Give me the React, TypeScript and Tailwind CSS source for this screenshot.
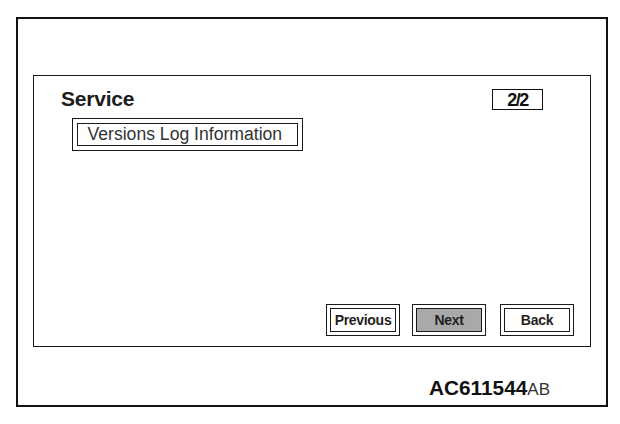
import React from 'react'

function NavButton({ label, active }: { label: string; active?: boolean }) {
  return (
    <div className="w-[74px] h-[32px] border border-[#1a1a1a] p-[3px] bg-white">
      <div
        className={`h-full w-full border border-[#1a1a1a] flex items-center justify-center text-[14px] font-bold leading-none text-[#1f1f1f] tracking-[-0.3px] ${
          active ? 'bg-[#a9a9a9]' : 'bg-white'
        }`}
      >
        {label}
      </div>
    </div>
  )
}

export default function App() {
  return (
    <div
      className="w-[620px] h-[424px] bg-white overflow-hidden"
      style={{ fontFamily: '"Liberation Sans", Arial, sans-serif' }}
    >
      <div className="ml-[16px] mt-[17px] w-[592px] h-[390px] border-2 border-[#111] flex flex-col">
        {/* Screen panel */}
        <div className="mx-[15px] mt-[56px] h-[272px] border border-[#1a1a1a] flex flex-col">
          <div className="flex items-start justify-between pl-[27px] pr-[47px] pt-[12px]">
            <div className="h-[21px] text-[21px] font-bold leading-none text-[#1c1c1c] tracking-[-0.2px]">
              Service
            </div>
            <div className="mt-[1px] w-[51px] h-[21px] border-[1.5px] border-[#111] flex items-center justify-center text-[18px] font-bold leading-none text-[#111] tracking-[-1.5px]">
              2/2
            </div>
          </div>

          <div className="ml-[38px] mt-[8px] w-[231px] h-[33px] border border-[#1a1a1a] p-[4px]">
            <div className="h-full w-full border-[1.5px] border-[#1a1a1a] flex items-center pl-[9.5px] text-[17.6px] leading-none text-[#333]">
              Versions Log Information
            </div>
          </div>

          <div className="mt-auto mb-[10px] pr-[16px] flex justify-end items-center">
            <NavButton label="Previous" />
            <div className="ml-[12px]">
              <NavButton label="Next" active />
            </div>
            <div className="ml-[14px]">
              <NavButton label="Back" />
            </div>
          </div>
        </div>

        {/* Figure code */}
        <div className="mt-[31px] pr-[56px] flex justify-end items-baseline leading-none">
          <span className="text-[20.8px] font-bold text-[#111]">AC611544</span>
          <span className="text-[17px] text-[#333]">AB</span>
        </div>
      </div>
    </div>
  )
}
